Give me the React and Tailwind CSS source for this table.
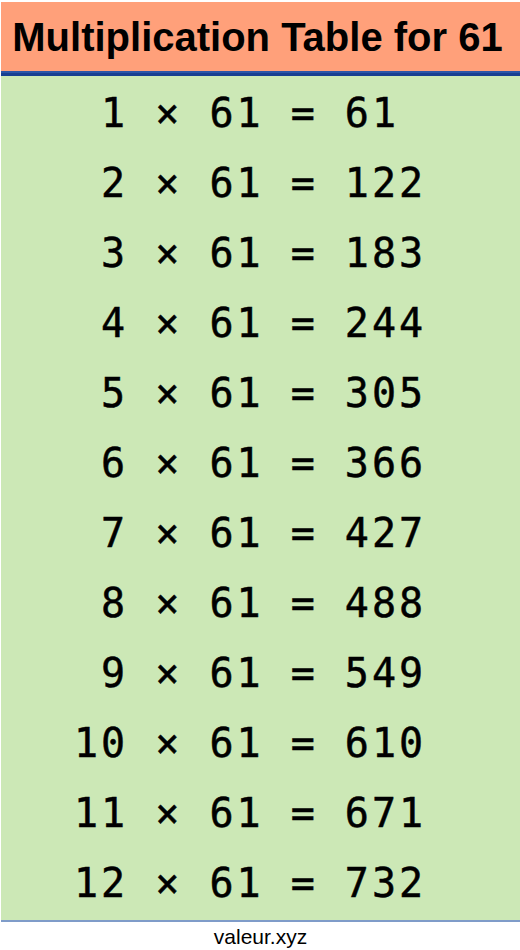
const rows = Array.from({ length: 12 }, (_, i) => i + 1);

function pad(n) {
  return n < 10 ? " " + n : String(n);
}

export default function App() {
  return (
    <div className="w-[520px] h-[950px] bg-white pt-[2px] pl-[1px] overflow-hidden">
      <div className="h-[69px] bg-[#ffa07a] flex items-center justify-center pr-[6px]">
        <h1
          className="text-[40px] font-bold text-black leading-none"
          style={{ fontFamily: '"Liberation Sans", Arial, sans-serif' }}
        >
          Multiplication Table for 61
        </h1>
      </div>
      <div className="h-[2px] bg-[#2a55a8]" />
      <div className="h-[3px] bg-[#173f91]" />
      <div className="bg-[#cce8b6] py-[2px] pl-[73px] border-b-2 border-[#7f9cc9]">
        {rows.map((n) => (
          <div
            key={n}
            className="h-[70px] leading-[70px] text-[40px] text-black whitespace-pre tracking-[3px] [-webkit-text-stroke:0.5px_black]"
            style={{ fontFamily: '"DejaVu Sans Mono", monospace' }}
          >
            {`${pad(n)} × 61 = ${n * 61}`}
          </div>
        ))}
      </div>
      <div
        className="h-[30px] flex items-center justify-center text-[21px] text-black"
        style={{ fontFamily: '"Liberation Sans", Arial, sans-serif' }}
      >
        valeur.xyz
      </div>
    </div>
  );
}
